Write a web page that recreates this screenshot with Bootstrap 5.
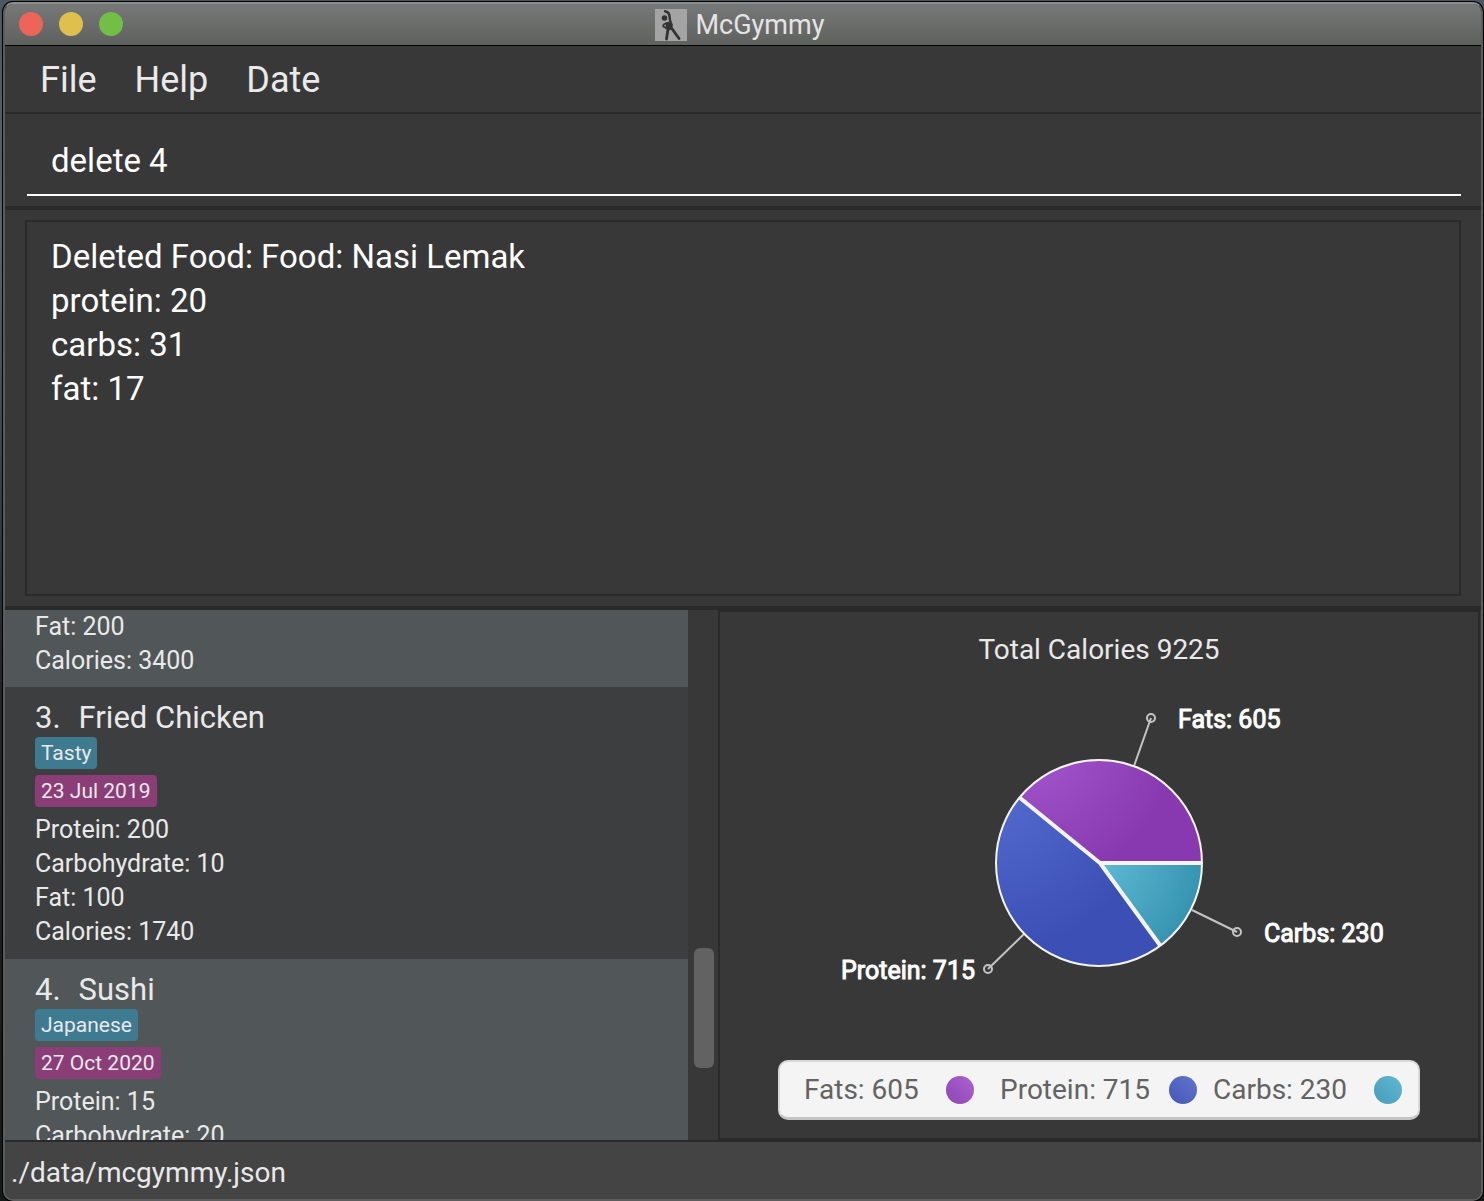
<!DOCTYPE html>
<html lang="en">
<head>
<meta charset="utf-8">
<meta name="viewport" content="width=device-width, initial-scale=1">
<title>McGymmy</title>
<link href="https://cdn.jsdelivr.net/npm/bootstrap@5.3.0/dist/css/bootstrap.min.css" rel="stylesheet">
<style>
  :root { --edge: #2a2a2a; --pane: #383838; --ink: #e9e9e9; }
  body { font-family: Roboto, Inter, "Liberation Sans", sans-serif; color: var(--ink);
    background: linear-gradient(#4c5762, #59636b 20%, #20262b 55%, #141a18); }
  .desk { padding: 2px 1px 0 3px; }
  .app-window { background: var(--pane); border: 2px solid #5c5c5c; border-top-color: #8d908d;
    border-radius: 10px; box-shadow: 0 0 0 1px #000; }
  .title-bar { height: 42px; background: linear-gradient(#777978, #5f615f); border-bottom: 1px solid #000;
    font-size: 27px; line-height: 40px; padding-right: 6px; color: #e4e4e4; }
  .lights { left: 14px; top: 8px; }
  .light { width: 24px; height: 24px; border: 0; padding: 0; border-radius: 50%; }
  .light-close { background: #ed655a; }
  .light-min { background: #e0c04c; }
  .light-max { background: #72be47; }
  .menu-strip { height: 68px; padding: 0 16px; border-bottom: 2px solid var(--edge); }
  .menu-strip button { font-size: 36px; line-height: 68px; padding: 0 19px; border: 0; background: none; color: var(--ink); }
  .command-zone { padding: 12px 20px 10px 22px; border-bottom: 4px solid var(--edge); }
  .command-box { height: 70px; padding: 0 24px; border: 0; border-bottom: 2px solid #fff; border-radius: 0;
    background: none; color: #fff; font-size: 33px; outline: 0; }
  .result-zone { padding: 10px 20px; border-bottom: 4px solid var(--edge); }
  .result-box { height: 376px; padding: 13px 24px; border: 2px solid var(--edge); background: none; color: #fff;
    font-size: 33px; line-height: 44px; resize: none; outline: 0; }
  .lower { min-height: 0; }
  .food-side { flex: 0 0 713px; min-height: 0; }
  .food-list { overflow: hidden; }
  .food-item { padding: 10px 30px; background: #3c3e3f; font-size: 25px; line-height: 34px; }
  .food-item.alt { background: #515658; }
  .food-item.tail { padding-top: 0; padding-bottom: 9px; }
  .food-name { gap: 18px; font-size: 31px; line-height: 42px; height: 40px; font-weight: 400; }
  .food-chip { height: 32px; margin-bottom: 6px; padding: 0 6px; border-radius: 4px; font-size: 21px; line-height: 33px; }
  .chip-tag { background: #3e7b91; }
  .chip-date { background: #8b3d78; }
  .scroll-track { width: 30px; padding: 338px 4px 0 6px; }
  .scroll-thumb { height: 120px; border-radius: 6px; background: #626262; }
  .chart-pane { border: 2px solid var(--edge); min-width: 0; margin-right: 1px; }
  .chart-title { margin-top: 18px; font-size: 28px; line-height: 40px; font-weight: 400; }
  .pie { width: 600px; height: 350px; margin-top: 20px; font-size: 25px; }
  .legend-box { height: 60px; width: 642px; margin-top: 20px; border-radius: 10px; background: #f4f4f4;
    border: 2px solid #d8d8d8; border-bottom: 3px solid #c4c4c4; color: #636363; font-size: 28px; padding: 0 16px 0 24px; }
  .legend-entry { width: 170px; margin-right: 26px; }
  .legend-entry + .legend-entry { width: 197px; margin-right: 16px; }
  .legend-entry:last-child { width: 189px; margin-right: 0; }
  .dot { width: 28px; height: 28px; border-radius: 50%; }
  .dot-fats { background: linear-gradient(225deg, #ad62d0, #8d45b5); }
  .dot-protein { background: linear-gradient(225deg, #6274cd, #4658b8); }
  .dot-carbs { background: linear-gradient(225deg, #63b9d1, #459cb9); }
  .status-line { height: 59px; border-top: 2px solid var(--edge); background: #444; font-size: 28px; line-height: 62px;
    padding: 0 6px; border-radius: 0 0 8px 8px; }
</style>
</head>
<body>
<div class="desk vh-100">
<div class="app-window d-flex flex-column h-100 overflow-hidden">
  <header class="title-bar position-relative d-flex justify-content-center align-items-center flex-shrink-0">
    <div class="lights position-absolute d-flex gap-3">
      <button type="button" class="light light-close" aria-label="Close"></button>
      <button type="button" class="light light-min" aria-label="Minimize"></button>
      <button type="button" class="light light-max" aria-label="Zoom"></button>
    </div>
    <svg class="me-2" width="32" height="32" viewBox="0 0 32 32" aria-hidden="true">
      <rect width="32" height="32" fill="#a4a4a4"/>
      <circle cx="9.500" cy="9" r="2.800" fill="#333"/>
      <path d="M11 14.500Q14 12.500 17.500 15L17.500 20L13 22L10.500 19Z" fill="#333"/>
      <g fill="none" stroke="#333" stroke-linecap="round" stroke-linejoin="round">
        <path d="M10 2.200Q14 2.800 14.500 7Q14.500 11 16.500 16" stroke-width="2.400"/>
        <path d="M13.500 13.500Q7.500 15 8.200 17.500L13 20" stroke-width="1.800"/>
        <path d="M13 20L11.500 30M16.500 19L24 29.500" stroke-width="2.800"/>
      </g>
    </svg>
    <span>McGymmy</span>
  </header>

  <nav class="menu-strip d-flex flex-shrink-0" aria-label="Main menu">
    <button type="button">File</button>
    <button type="button">Help</button>
    <button type="button">Date</button>
  </nav>

  <div class="command-zone flex-shrink-0">
    <input class="command-box d-block w-100" type="text" value="delete 4" aria-label="Command">
  </div>

  <div class="result-zone flex-shrink-0">
    <textarea class="result-box d-block w-100" aria-label="Result" readonly>Deleted Food: Food: Nasi Lemak
protein: 20
carbs: 31
fat: 17</textarea>
  </div>

  <main class="lower d-flex flex-grow-1">
    <section class="food-side d-flex">
      <div class="food-list flex-grow-1">
        <article class="food-item alt tail">
          <div>Fat: 200</div>
          <div>Calories: 3400</div>
        </article>
        <article class="food-item d-flex flex-column align-items-start">
          <h2 class="food-name d-flex m-0"><span>3.</span><span>Fried Chicken</span></h2>
          <span class="food-chip chip-tag">Tasty</span>
          <span class="food-chip chip-date">23 Jul 2019</span>
          <div>Protein: 200</div>
          <div>Carbohydrate: 10</div>
          <div>Fat: 100</div>
          <div>Calories: 1740</div>
        </article>
        <article class="food-item alt d-flex flex-column align-items-start">
          <h2 class="food-name d-flex m-0"><span>4.</span><span>Sushi</span></h2>
          <span class="food-chip chip-tag">Japanese</span>
          <span class="food-chip chip-date">27 Oct 2020</span>
          <div>Protein: 15</div>
          <div>Carbohydrate: 20</div>
        </article>
      </div>
      <div class="scroll-track"><div class="scroll-thumb"></div></div>
    </section>

    <section class="chart-pane flex-grow-1 d-flex flex-column align-items-center">
      <h2 class="chart-title mb-0">Total Calories 9225</h2>
      <svg class="pie flex-shrink-0" viewBox="799 690 600 350" role="img" aria-label="Calories by nutrient">
        <defs>
          <radialGradient id="gFats" gradientUnits="userSpaceOnUse" cx="1030" cy="740" r="145">
            <stop offset="0" stop-color="#a558cf"/><stop offset="1" stop-color="#8839b0"/>
          </radialGradient>
          <radialGradient id="gProtein" gradientUnits="userSpaceOnUse" cx="1000" cy="800" r="150">
            <stop offset="0" stop-color="#5469cd"/><stop offset="1" stop-color="#3b4fb5"/>
          </radialGradient>
          <radialGradient id="gCarbs" gradientUnits="userSpaceOnUse" cx="1100" cy="863" r="100">
            <stop offset="0" stop-color="#5fb9d4"/><stop offset="1" stop-color="#3895b2"/>
          </radialGradient>
        </defs>
        <g stroke="#c4c4c4" stroke-width="2" fill="none">
          <path d="M1134 766L1151 718M1192 910L1237 932M1024 934L988 969"/>
          <circle cx="1151" cy="718" r="4"/><circle cx="1237" cy="932" r="4"/><circle cx="988" cy="969" r="4"/>
        </g>
        <circle cx="1099" cy="863" r="103" fill="url(#gProtein)"/>
        <path d="M1099 863H1202A103 103 0 0 0 1019.500 797.500Z" fill="url(#gFats)"/>
        <path d="M1099 863H1202A103 103 0 0 1 1160.400 945.700Z" fill="url(#gCarbs)"/>
        <circle cx="1099" cy="863" r="103" fill="none" stroke="#f4f4f4" stroke-width="2"/>
        <path d="M1202 863H1100L1019.500 797.500M1100 863L1160.400 945.700" fill="none" stroke="#f4f4f4" stroke-width="4"/>
        <g fill="#fff" stroke="#fff" stroke-width="1">
          <text x="1178" y="728">Fats: 605</text>
          <text x="1264" y="942">Carbs: 230</text>
          <text x="975" y="979" text-anchor="end">Protein: 715</text>
        </g>
      </svg>
      <div class="legend-box d-flex align-items-center flex-shrink-0">
        <div class="legend-entry d-flex justify-content-between align-items-center"><span>Fats: 605</span><span class="dot dot-fats"></span></div>
        <div class="legend-entry d-flex justify-content-between align-items-center"><span>Protein: 715</span><span class="dot dot-protein"></span></div>
        <div class="legend-entry d-flex justify-content-between align-items-center"><span>Carbs: 230</span><span class="dot dot-carbs"></span></div>
      </div>
    </section>
  </main>

  <footer class="status-line flex-shrink-0">./data/mcgymmy.json</footer>
</div>
</div>
<script src="https://cdn.jsdelivr.net/npm/bootstrap@5.3.0/dist/js/bootstrap.bundle.min.js"></script>
</body>
</html>
